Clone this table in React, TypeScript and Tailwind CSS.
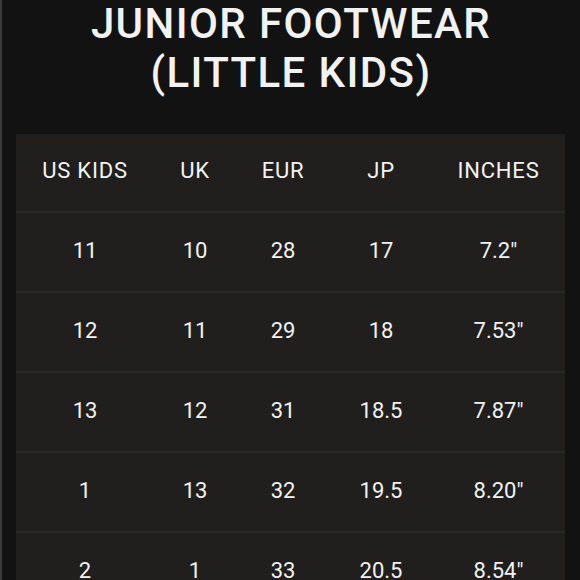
import React from "react";

const rows = [
  ["11", "10", "28", "17", "7.2\""],
  ["12", "11", "29", "18", "7.53\""],
  ["13", "12", "31", "18.5", "7.87\""],
  ["1", "13", "32", "19.5", "8.20\""],
  ["2", "1", "33", "20.5", "8.54\""],
];
const headers = ["US KIDS", "UK", "EUR", "JP", "INCHES"];

export default function App() {
  return (
    <div
      className="w-[580px] h-[580px] overflow-hidden bg-[#121212] border-l-2 border-[#3a3a3a] text-[#f2f2f2]"
      style={{ fontFamily: "Roboto, 'Liberation Sans', sans-serif" }}
    >
      <div className="flex flex-col items-center mt-[-1px] text-[42px] leading-[49px] font-medium tracking-[1.4px]">
        <div>JUNIOR FOOTWEAR</div>
        <div>(LITTLE KIDS)</div>
      </div>
      <div className="ml-[14px] w-[549px] mt-[37px] bg-[#201f1d]">
        <div className="grid grid-cols-[138px_82px_94px_102px_133px] h-[77px] items-center text-center text-[22px] tracking-[0.8px] pb-[4px]">
          {headers.map((h) => (
            <div key={h}>{h}</div>
          ))}
        </div>
        {rows.map((r, i) => (
          <div
            key={i}
            className="grid grid-cols-[138px_82px_94px_102px_133px] h-[80px] items-center text-center text-[22px] pb-[4px] border-t-2 border-[#292928]"
          >
            {r.map((c, j) => (
              <div key={j}>{c}</div>
            ))}
          </div>
        ))}
      </div>
    </div>
  );
}
